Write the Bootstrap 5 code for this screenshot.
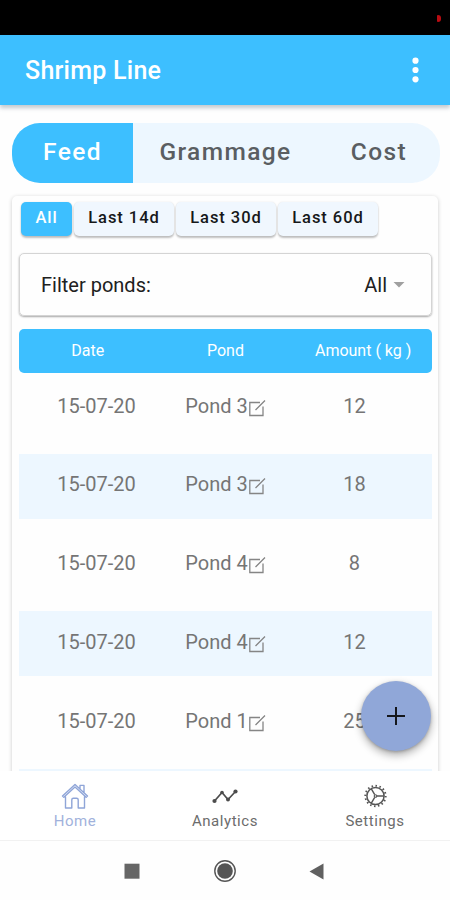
<!DOCTYPE html>
<html lang="en">
<head>
<meta charset="utf-8">
<meta name="viewport" content="width=device-width, initial-scale=1">
<title>Shrimp Line</title>
<link href="https://cdn.jsdelivr.net/npm/bootstrap@5.3.0/dist/css/bootstrap.min.css" rel="stylesheet">
<style>
  body { font-family: Roboto, "Liberation Sans", sans-serif; background: #fefefe; line-height: 1; }
  .phone { width: 450px; height: 900px; }
  .status-strip { height: 35px; background: #000; padding-right: 9px; padding-top: 1px; }
  .status-dot { width: 4px; height: 7px; background: #b80c12; border-radius: 1px 3px 3px 1px; }
  .app-bar { height: 70px; background: #3dbfff; padding: 0 31px 0 25px; box-shadow: 0 3px 4px rgba(60,80,100,.3); z-index: 1; }
  .app-title { font-size: 25px; font-weight: 500; letter-spacing: .25px; }
  .screen { padding: 18px 10px 0 12px; }
  .segments { height: 60px; border-radius: 28px; background: #edf7ff; color: #5a5e62; font-size: 24.5px; font-weight: 500; letter-spacing: 1.4px; }
  .segments button { border: 0; background: none; padding: 0 0 2px; color: inherit; font: inherit; letter-spacing: inherit; }
  .seg-feed { width: 121px; }
  .segments .seg-feed { background: #3dbfff; color: #fff; }
  .seg-gram { width: 185px; }
  .panel { width: 426px; margin-top: 13px; padding: 6px 6px 0 7px; border-radius: 5px 5px 0 0; background: #fefefe; box-shadow: 0 1px 4px rgba(0,0,0,.2); }
  .ranges { gap: 2px; padding-left: 2px; }
  .range-btn { height: 34px; padding: 0 0 1px; border: 0; border-radius: 5px; background: #f0f7fe; color: #16181a; font-size: 16.5px; font-weight: 500; letter-spacing: .95px; line-height: 1; box-shadow: 0 2px 2px rgba(0,0,0,.24), 0 0 2px rgba(0,0,0,.1); width: 100px; }
  .range-btn.picked { width: 51px; background: #3dbfff; color: #fff; }
  .filter-box { height: 63px; margin-top: 17px; padding: 0 26px 0 21px; border: 1px solid #d4d4d4; border-radius: 5px; font-size: 20px; color: #202020; box-shadow: 0 1px 2px rgba(0,0,0,.35); }
  .caret { width: 12px; height: 6px; margin-left: 6px; background: #a0a0a0; clip-path: polygon(0 0,100% 0,50% 100%); }
  .table-head { height: 44px; margin-top: 13px; border-radius: 5px; background: #3dbfff; color: #fff; font-size: 16px; }
  .feed-rows { gap: 13.75px; padding-top: 2px; }
  .feed-row { height: 65px; flex: none; padding: 0 13px 4px; color: #757575; font-size: 20px; }
  .feed-row:nth-child(even) { background: #edf7ff; }
  .third { width: 33.3333%; }
  .edit-icon { width: 18px; height: 18px; margin: 4px 0 0 0; }
  .fab { right: 19px; bottom: 20px; width: 70px; height: 70px; background: #90a7d8; border: 0; box-shadow: 0 4px 8px rgba(0,0,0,.32), 0 1px 3px rgba(0,0,0,.2); }
  .tabs { height: 70px; background: #fff; color: #6c6c6c; font-size: 15px; letter-spacing: .55px; border-bottom: 1px solid #f1f1f1; padding-top: 11px; }
  .tabs a { color: inherit; text-decoration: none; gap: 4px; width: 33.3333%; }
  .tabs a.current { color: #a1b2dc; }
  .system-nav { height: 59px; background: #fefefe; }
  .system-nav svg { margin: 0 34.3px; }
</style>
<script src="https://cdn.jsdelivr.net/npm/bootstrap@5.3.0/dist/js/bootstrap.bundle.min.js"></script>
</head>
<body>
<svg class="d-none">
  <symbol id="edit" viewBox="0 0 18 18"><path d="M12 3.500H1.800v13H15V7.500M7.500 11L17 1.500" fill="none" stroke="#858585" stroke-width="1.3"/></symbol>
</svg>
<div class="phone d-flex flex-column overflow-hidden">
  <div class="status-strip d-flex align-items-center justify-content-end flex-shrink-0"><span class="status-dot"></span></div>
  <header class="app-bar d-flex align-items-center justify-content-between flex-shrink-0 position-relative text-white">
    <span class="app-title">Shrimp Line</span>
    <svg width="7" height="26" viewBox="0 0 7 26" fill="#fff"><circle cx="3.500" cy="3.700" r="3.100"/><circle cx="3.500" cy="13" r="3.100"/><circle cx="3.500" cy="22.300" r="3.100"/></svg>
  </header>
  <div class="flex-grow-1 position-relative overflow-hidden d-flex flex-column">
    <main class="screen d-flex flex-column flex-grow-1 overflow-hidden">
      <div class="segments d-flex overflow-hidden flex-shrink-0">
        <button class="seg-feed">Feed</button>
        <button class="seg-gram">Grammage</button>
        <button class="flex-grow-1">Cost</button>
      </div>
      <section class="panel flex-grow-1 d-flex flex-column">
        <div class="ranges d-flex flex-shrink-0">
          <button class="btn range-btn picked">All</button>
          <button class="btn range-btn">Last 14d</button>
          <button class="btn range-btn">Last 30d</button>
          <button class="btn range-btn">Last 60d</button>
        </div>
        <div class="filter-box d-flex align-items-center flex-shrink-0">
          <span class="me-auto">Filter ponds:</span>
          <span>All</span><span class="caret"></span>
        </div>
        <div class="table-head d-flex align-items-center text-center flex-shrink-0">
          <span class="third">Date</span><span class="third">Pond</span><span class="third">Amount ( kg )</span>
        </div>
        <div class="feed-rows d-flex flex-column text-center">
          <div class="feed-row d-flex align-items-center"><span class="third">15-07-20</span><span class="third d-flex justify-content-center align-items-center">Pond 3<svg class="edit-icon"><use href="#edit"/></svg></span><span class="third">12</span></div>
          <div class="feed-row d-flex align-items-center"><span class="third">15-07-20</span><span class="third d-flex justify-content-center align-items-center">Pond 3<svg class="edit-icon"><use href="#edit"/></svg></span><span class="third">18</span></div>
          <div class="feed-row d-flex align-items-center"><span class="third">15-07-20</span><span class="third d-flex justify-content-center align-items-center">Pond 4<svg class="edit-icon"><use href="#edit"/></svg></span><span class="third">8</span></div>
          <div class="feed-row d-flex align-items-center"><span class="third">15-07-20</span><span class="third d-flex justify-content-center align-items-center">Pond 4<svg class="edit-icon"><use href="#edit"/></svg></span><span class="third">12</span></div>
          <div class="feed-row d-flex align-items-center"><span class="third">15-07-20</span><span class="third d-flex justify-content-center align-items-center">Pond 1<svg class="edit-icon"><use href="#edit"/></svg></span><span class="third">25</span></div>
          <div class="feed-row"></div>
        </div>
      </section>
    </main>
    <button class="fab position-absolute rounded-circle d-flex align-items-center justify-content-center p-0" aria-label="Add">
      <svg width="20" height="20" viewBox="0 0 20 20"><path d="M10 1v18M1 10h18" stroke="#15171c" stroke-width="2"/></svg>
    </button>
  </div>
  <nav class="tabs d-flex flex-shrink-0 position-relative">
    <a href="#" class="current d-flex flex-column align-items-center">
      <svg width="28" height="28" viewBox="0 0 28 28" fill="none" stroke="#8fa5d8" stroke-width="1.4" stroke-linejoin="round"><path d="M4.500 14.500V26h6.300v-8.200q0-1.600 1.600-1.600h3.200q1.600 0 1.600 1.600V26h6.300V14.500M1.500 14L14 2.500 26.500 14l-1.300 1.200L14 5 2.800 15.200zM19 6.800V3.400h4v7"/></svg>
      <span>Home</span>
    </a>
    <a href="#" class="d-flex flex-column align-items-center">
      <svg width="28" height="28" viewBox="0 0 28 28"><path d="M3.500 19L11 10.500l6 7L24.500 9.500" fill="none" stroke="#4c4c4c" stroke-width="1.700"/><g fill="#4c4c4c"><circle cx="3.500" cy="19" r="2.100"/><circle cx="11" cy="10.500" r="1.800"/><circle cx="17" cy="17.500" r="2"/><circle cx="24.500" cy="9.500" r="2.100"/></g></svg>
      <span>Analytics</span>
    </a>
    <a href="#" class="d-flex flex-column align-items-center">
      <svg width="28" height="28" viewBox="0 0 28 28" fill="none" stroke="#555"><circle cx="14.500" cy="14" r="8.600" stroke-width="1.500"/><circle cx="14.500" cy="14" r="10.200" stroke-width="1.900" stroke-dasharray="1.500 2.425" pathLength="62.8"/><circle cx="14.500" cy="14" r="1.300" stroke-width="1.100"/><path d="M16 14H23M13.700 12.700L10.200 6.600M13.700 15.300L10.200 21.400" stroke-width="1.400"/></svg>
      <span>Settings</span>
    </a>
  </nav>
  <div class="system-nav d-flex align-items-center justify-content-center flex-shrink-0">
    <svg width="24" height="24" viewBox="0 0 24 24"><path d="M4.500 4.700h15v15h-15z" fill="#666"/></svg>
    <svg width="24" height="24" viewBox="0 0 24 24"><circle cx="12" cy="12" r="10.200" fill="none" stroke="#555" stroke-width="1.400"/><circle cx="12" cy="12" r="7.800" fill="#555"/></svg>
    <svg width="24" height="24" viewBox="0 0 24 24"><path d="M17.500 4.500v16L3.500 12.500z" fill="#606060"/></svg>
  </div>
</div>
</body>
</html>
